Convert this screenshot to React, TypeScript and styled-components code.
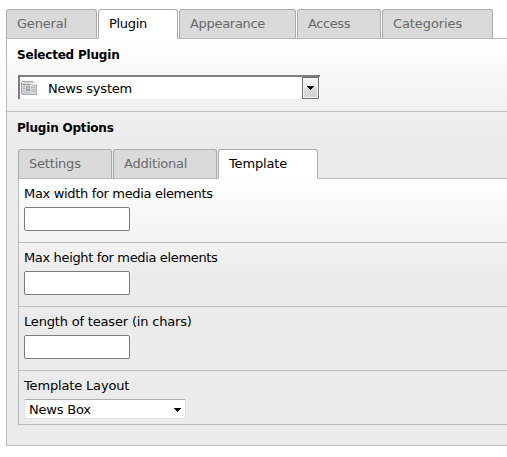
import React from "react";
import styled, { createGlobalStyle } from "styled-components";

const Global = createGlobalStyle`
  * { box-sizing: border-box; }
  body { margin: 0; background: #fff; overflow: hidden; }
`;

const Page = styled.main`
  width: 507px;
  height: 457px;
  padding: 9px 0 0 6px;
  overflow: hidden;
  color: #000;
  font: 13px/16px Verdana, "DejaVu Sans", sans-serif;
`;

const TabBar = styled.nav`
  display: flex;
  gap: 1px;
  height: 30px;
`;

const Tab = styled.button<{ $width: number; $active?: boolean; $spacing?: number }>`
  flex: none;
  width: ${(p) => p.$width}px;
  height: 30px;
  padding: 0 0 0 10px;
  border: 1px solid #ababab;
  border-bottom-color: ${(p) => (p.$active ? "#fff" : "#b8b8b8")};
  border-radius: 3px 3px 0 0;
  background: ${(p) => (p.$active ? "#fff" : "#dadada")};
  color: ${(p) => (p.$active ? "#000" : "#696969")};
  font: inherit;
  letter-spacing: ${(p) => p.$spacing ?? -0.2}px;
  text-align: left;
  white-space: nowrap;
`;

const Panel = styled.section<{ $height: number }>`
  height: ${(p) => p.$height}px;
  margin-top: -1px;
  border: 1px solid #b9b9b9;
  border-right: 0;
  background: linear-gradient(#fff, #ebebeb 100px) no-repeat #ebebeb;
`;

const PluginSection = styled.div`
  height: 73px;
  padding: 8px 0 0 11px;
  border-bottom: 1px solid #bdbdbd;
`;

const OptionsSection = styled.div`
  padding: 8px 0 0 11px;
`;

const Heading = styled.h2<{ $gap: number }>`
  margin: 0 0 ${(p) => p.$gap}px -1px;
  font-size: 12px;
  line-height: 16px;
  font-weight: bold;
  letter-spacing: -0.2px;
`;

const PluginSelect = styled.div`
  display: flex;
  align-items: center;
  width: 302px;
  height: 24px;
  padding-left: 1px;
  border: solid #7e7e7e;
  border-width: 2px 0 0 2px;
  background: #fff;
`;

const PluginName = styled.span`
  flex: 1;
  margin-left: 11px;
  padding-top: 1px;
  letter-spacing: -0.2px;
`;

const DropButton = styled.button`
  display: flex;
  align-items: center;
  justify-content: center;
  width: 17px;
  height: 22px;
  margin-right: 1px;
  padding: 0;
  border: 1px solid #707070;
  background: linear-gradient(#f5f5f5, #ededed 48%, #dddddd 52%, #cfcfcf);
  box-shadow: inset 0 0 0 1px #f6f6f6;
`;

const Field = styled.div<{ $height: number; $last?: boolean }>`
  height: ${(p) => p.$height}px;
  padding: 7px 0 0 5px;
  border-bottom: ${(p) => (p.$last ? 0 : "1px solid #bdbdbd")};
`;

const Label = styled.label<{ $spacing: number }>`
  display: block;
  height: 16px;
  letter-spacing: ${(p) => p.$spacing}px;
`;

const Input = styled.input`
  display: block;
  width: 106px;
  height: 24px;
  margin-top: 5px;
  border: 1px solid #7d7d7d;
  border-radius: 2px;
  background: #fff;
`;

const LayoutSelect = styled.div`
  display: flex;
  align-items: center;
  justify-content: space-between;
  width: 162px;
  height: 20px;
  margin-top: 5px;
  padding: 1px 4px 0;
  border: 1px solid #e2e3ea;
  border-top-color: #abadb3;
  border-radius: 1px;
  background: #fff;
  letter-spacing: -0.2px;
`;

const Arrow = () => (
  <svg width="7" height="4" viewBox="0 0 7 4" shapeRendering="crispEdges">
    <path d="M0 0h7v1H0zM1 1h5v1H1zM2 2h3v1H2zM3 3h1v1H3z" fill="#000" />
  </svg>
);

const NewsIcon = () => (
  <svg width="16" height="16" viewBox="0 0 16 16" shapeRendering="crispEdges">
    <path d="M1 1h11l4 4v10H1z" fill="#d5d9da" />
    <path d="M0 2h1v12H0zM1 1h11v1H1zM1 14h15v1H1zM15 5h1v9h-1z" fill="#a3a8ab" />
    <path d="M11 2h1v4h4V5h-1V4h-1V3h-1V2z" fill="#a9afb1" />
    <path d="M12 2h1v1h1v1h1v1h-3z" fill="#f3f4f4" />
    <path d="M2 4h3v1H2zM6 4h3v1H6z" fill="#858b8f" />
    <path d="M2 6h2v1H2zM2 8h2v1H2zM2 10h2v1H2zM10 7h4v1h-4zM10 9h4v1h-4zM2 12h7v1H2zM10 11h4v1h-4z" fill="#b2b8bb" />
    <path d="M5 6h4v5H5z" fill="#9fa7ab" />
    <path d="M6 7h2v2H6z" fill="#bcc3c6" />
  </svg>
);

const mediaFields = [
  { label: "Max width for media elements", spacing: -0.33 },
  { label: "Max height for media elements", spacing: -0.35 },
  { label: "Length of teaser (in chars)", spacing: -0.18 },
];

export default function App() {
  return (
    <Page>
      <Global />
      <TabBar>
        <Tab $width={91}>General</Tab>
        <Tab $width={80} $active $spacing={-0.3}>Plugin</Tab>
        <Tab $width={117} $spacing={-0.3}>Appearance</Tab>
        <Tab $width={84} $spacing={-0.4}>Access</Tab>
        <Tab $width={111} $spacing={-0.1}>Categories</Tab>
      </TabBar>
      <Panel $height={408}>
        <PluginSection>
          <Heading $gap={12}>Selected Plugin</Heading>
          <PluginSelect>
            <NewsIcon />
            <PluginName>News system</PluginName>
            <DropButton aria-label="Choose plugin"><Arrow /></DropButton>
          </PluginSelect>
        </PluginSection>
        <OptionsSection>
          <Heading $gap={13}>Plugin Options</Heading>
          <TabBar>
            <Tab $width={94}>Settings</Tab>
            <Tab $width={104}>Additional</Tab>
            <Tab $width={100} $active $spacing={-0.15}>Template</Tab>
          </TabBar>
          <Panel $height={247}>
            {mediaFields.map(({ label, spacing }) => (
              <Field key={label} $height={64}>
                <Label $spacing={spacing}>{label}</Label>
                <Input aria-label={label} />
              </Field>
            ))}
            <Field $height={53} $last>
              <Label $spacing={-0.16}>Template Layout</Label>
              <LayoutSelect>News Box<Arrow /></LayoutSelect>
            </Field>
          </Panel>
        </OptionsSection>
      </Panel>
    </Page>
  );
}
